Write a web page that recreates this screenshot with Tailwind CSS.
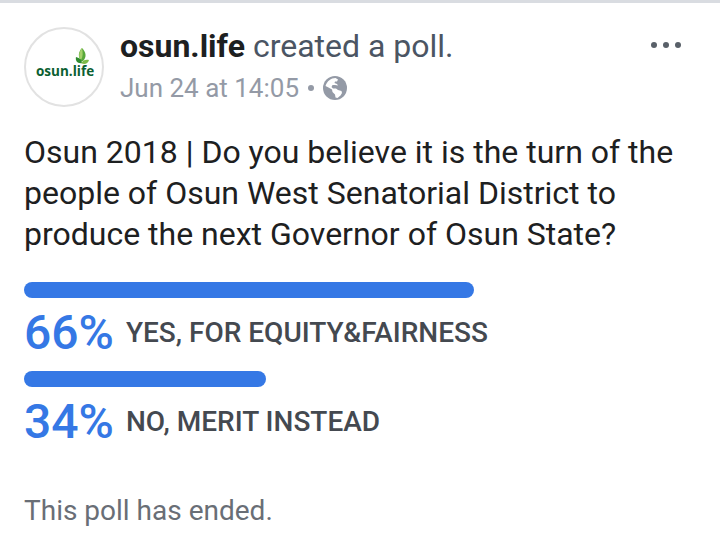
<!DOCTYPE html>
<html lang="en">
<head>
    <meta charset="UTF-8">
    <meta name="viewport" content="width=device-width, initial-scale=1.0">
    <title>osun.life poll</title>
    <script src="https://cdn.jsdelivr.net/npm/@tailwindcss/browser@4"></script>
</head>
<body class="bg-white min-h-screen border-t-3 border-[#d9dce1] font-['Roboto',sans-serif] text-[#1d2021]">
    <article class="px-6 pt-6">
        <!-- Post header -->
        <header class="flex items-start gap-4">
            <a href="#" aria-label="osun.life" class="shrink-0">
                <svg class="size-20" viewBox="0 0 80 80">
                    <circle cx="40" cy="40" r="39" fill="#fff" stroke="#e2e2e2" stroke-width="2"/>
                    <path d="M57 34C54 30 54 25 58 21C62 25 63 30 59 34Z" fill="#58a83a"/>
                    <path d="M57 33C54 30 55 25 58 21C59 26 59 30 57 33Z" fill="#a5d16a"/>
                    <path d="M58 36C54 37 51 34 52 30C56 31 58 33 58 36Z" fill="#2f8b2f"/>
                    <path d="M57 36C59 33 62 32 65 33C64 37 60 38 57 36Z" fill="#7dbb48"/>
                    <text x="12" y="49" font-family="Open Sans, sans-serif" font-weight="700" font-size="13.5" fill="#0b6031">osun.life</text>
                </svg>
            </a>
            <div class="flex-1">
                <h1 class="text-[32px] leading-[38px] text-[#4b5563]"><a href="#" class="font-bold text-[#1d2021]">osun.life</a> created a poll.</h1>
                <p class="flex items-center gap-[9px] text-[26px] leading-[46px] text-[#949aa6]">
                    <a href="#">Jun 24 at 14:05</a>
                    <span class="size-1.5 rounded-full bg-[#949aa6]"></span>
                    <svg class="size-6" viewBox="0 0 24 24" role="img" aria-label="Public">
                        <circle cx="12" cy="12" r="12" fill="#949aa6"/>
                        <path d="M2.5 10C4 5 8 2 12.500 2L15 3.500L14 5.500L12 5.500L11.500 7L14 8L15 9.500L12 9L9.500 9L8.500 11L10 12.500L13 12.500L15 14L18.500 15L19 17L17.500 19.500L14.500 22L12.500 21.500L12 18.500L9.500 16L9 13.500L5.500 11.500Z" fill="#fff"/>
                    </svg>
                </p>
            </div>
            <button type="button" aria-label="More options" class="flex gap-1.5 pt-[15px] pr-[15px]">
                <span class="size-1.5 rounded-full bg-[#596069]"></span>
                <span class="size-1.5 rounded-full bg-[#596069]"></span>
                <span class="size-1.5 rounded-full bg-[#596069]"></span>
            </button>
        </header>

        <p class="mt-[21px] text-[32px] leading-[41px]">Osun 2018 | Do you believe it is the turn of the people of Osun West Senatorial District to produce the next Governor of Osun State?</p>

        <!-- Results -->
        <ul class="mt-[27px]">
            <li class="pb-1">
                <div class="h-4 rounded-full bg-[#3578e5]" style="width: 67%"></div>
                <p class="flex items-center gap-3 h-[69px]">
                    <span class="text-[48px] leading-[56px] font-medium text-[#3578e5]">66%</span>
                    <span class="text-[28px] leading-9 font-medium text-[#444950]">YES, FOR EQUITY&amp;FAIRNESS</span>
                </p>
            </li>
            <li class="pb-1">
                <div class="h-4 rounded-full bg-[#3578e5]" style="width: 36%"></div>
                <p class="flex items-center gap-3 h-[69px]">
                    <span class="text-[48px] leading-[56px] font-medium text-[#3578e5]">34%</span>
                    <span class="text-[28px] leading-9 font-medium text-[#444950]">NO, MERIT INSTEAD</span>
                </p>
            </li>
        </ul>

        <p class="mt-[33px] text-[28px] leading-9 text-[#696e76]">This poll has ended.</p>
    </article>
</body>
</html>
